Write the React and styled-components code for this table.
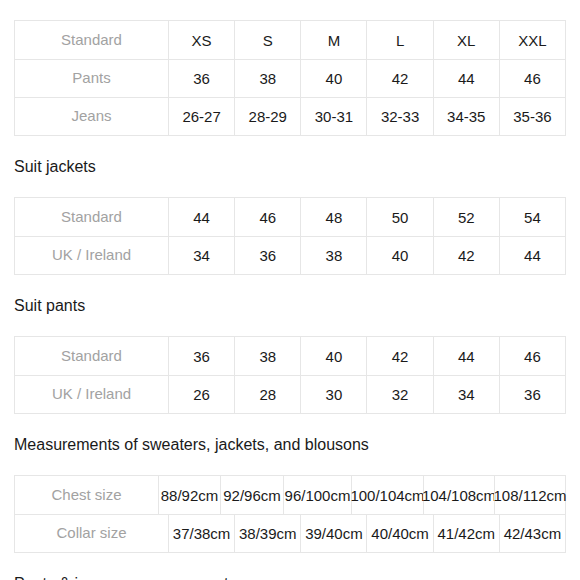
import React from "react";
import styled, { createGlobalStyle } from "styled-components";

const GlobalStyle = createGlobalStyle`
  html, body {
    margin: 0;
    padding: 0;
    background: #ffffff;
  }
  body {
    font-family: "Liberation Sans", Arial, Helvetica, sans-serif;
    color: #1a1a1a;
  }
`;

const Page = styled.div`
  width: 580px;
  box-sizing: border-box;
  padding: 20px 14px 0;
  overflow: hidden;
  height: 580px;
`;

const Heading = styled.h3`
  margin: 21px 0 20px;
  font-size: 16px;
  font-weight: 400;
  line-height: 20px;
  color: #1a1a1a;
  white-space: nowrap;
`;

const Table = styled.div`
  border: 1px solid #e6e6e6;
  width: 552px;
  box-sizing: border-box;
`;

// each row lays out its own columns, like the reference (rows don't share widths)
const Row = styled.div`
  display: grid;
  grid-template-columns: ${(p) => p.$cols || "153px repeat(6, 1fr)"};
  height: 38px;
  box-sizing: border-box;

  & + & {
    border-top: 1px solid #e6e6e6;
  }
`;

const Cell = styled.div`
  display: flex;
  align-items: center;
  justify-content: center;
  white-space: nowrap;
  font-size: 15px;
  color: ${(p) => (p.$label ? "#a2a2a2" : "#1a1a1a")};
  padding-bottom: ${(p) => (p.$label ? "2px" : "0")};
  min-width: 0;
  overflow: visible;

  & + & {
    border-left: 1px solid #e6e6e6;
  }
`;

const sections = [
  {
    title: null,
    rows: [
      ["Standard", "XS", "S", "M", "L", "XL", "XXL"],
      ["Pants", "36", "38", "40", "42", "44", "46"],
      ["Jeans", "26-27", "28-29", "30-31", "32-33", "34-35", "35-36"],
    ],
  },
  {
    title: "Suit jackets",
    rows: [
      ["Standard", "44", "46", "48", "50", "52", "54"],
      ["UK / Ireland", "34", "36", "38", "40", "42", "44"],
    ],
  },
  {
    title: "Suit pants",
    rows: [
      ["Standard", "36", "38", "40", "42", "44", "46"],
      ["UK / Ireland", "26", "28", "30", "32", "34", "36"],
    ],
  },
  {
    title: "Measurements of sweaters, jackets, and blousons",
    rows: [
      {
        cols: "143px 62px 63px 68px 72px 71px 1fr",
        cells: ["Chest size", "88/92cm", "92/96cm", "96/100cm", "100/104cm", "104/108cm", "108/112cm"],
      },
      ["Collar size", "37/38cm", "38/39cm", "39/40cm", "40/40cm", "41/42cm", "42/43cm"],
    ],
  },
];

function SizeTable({ rows }) {
  return (
    <Table>
      {rows.map((row, i) => {
        const cells = Array.isArray(row) ? row : row.cells;
        const cols = Array.isArray(row) ? undefined : row.cols;
        return (
          <Row key={i} $cols={cols}>
            {cells.map((c, j) => (
              <Cell key={j} $label={j === 0}>
                {c}
              </Cell>
            ))}
          </Row>
        );
      })}
    </Table>
  );
}

export default function App() {
  return (
    <>
      <GlobalStyle />
      <Page>
        {sections.map((s, i) => (
          <React.Fragment key={i}>
            {s.title && <Heading>{s.title}</Heading>}
            <SizeTable rows={s.rows} />
          </React.Fragment>
        ))}
        <Heading>Pants &amp; inseam measurements</Heading>
      </Page>
    </>
  );
}
